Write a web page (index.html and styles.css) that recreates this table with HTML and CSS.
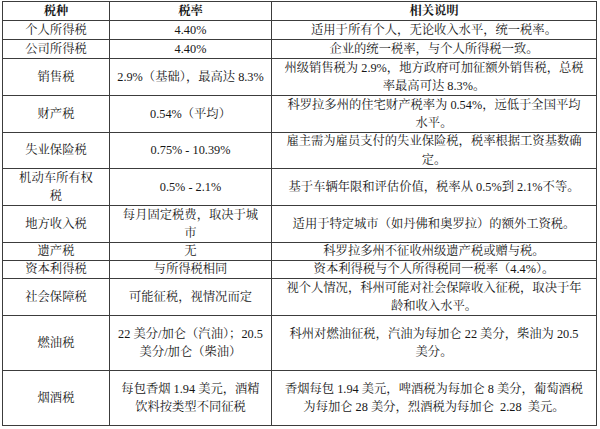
FILE: index.html
```html
<!DOCTYPE html>
<html lang="zh-CN">
<head>
<meta charset="utf-8">
<title>科罗拉多州税种</title>
<link rel="stylesheet" href="styles.css">
</head>
<body>
<div class="tax-table">
  <div class="cell head r1">税种</div>
  <div class="cell head r1">税率</div>
  <div class="cell head r1">相关说明</div>

  <div class="cell r1">个人所得税</div>
  <div class="cell r1">4.40%</div>
  <div class="cell r1">适用于所有个人，无论收入水平，统一税率。</div>

  <div class="cell r1">公司所得税</div>
  <div class="cell r1">4.40%</div>
  <div class="cell r1">企业的统一税率，与个人所得税一致。</div>

  <div class="cell r2">销售税</div>
  <div class="cell r2">2.9%（基础），最高达 8.3%</div>
  <div class="cell r2">州级销售税为 2.9%，地方政府可加征额外销售税，总税<br>率最高可达 8.3%。</div>

  <div class="cell r2">财产税</div>
  <div class="cell r2">0.54%（平均）</div>
  <div class="cell r2">科罗拉多州的住宅财产税率为 0.54%，远低于全国平均<br>水平。</div>

  <div class="cell r2s">失业保险税</div>
  <div class="cell r2s">0.75% - 10.39%</div>
  <div class="cell r2s">雇主需为雇员支付的失业保险税，税率根据工资基数确<br>定。</div>

  <div class="cell r2">机动车所有权<br>税</div>
  <div class="cell r2">0.5% - 2.1%</div>
  <div class="cell r2">基于车辆年限和评估价值，税率从 0.5%到 2.1%不等。</div>

  <div class="cell r2">地方收入税</div>
  <div class="cell r2">每月固定税费，取决于城<br>市</div>
  <div class="cell r2">适用于特定城市（如丹佛和奥罗拉）的额外工资税。</div>

  <div class="cell r1s">遗产税</div>
  <div class="cell r1s">无</div>
  <div class="cell r1s">科罗拉多州不征收州级遗产税或赠与税。</div>

  <div class="cell r1s">资本利得税</div>
  <div class="cell r1s">与所得税相同</div>
  <div class="cell r1s">资本利得税与个人所得税同一税率（4.4%）。</div>

  <div class="cell r2">社会保障税</div>
  <div class="cell r2">可能征税，视情况而定</div>
  <div class="cell r2">视个人情况，科州可能对社会保障收入征税，取决于年<br>龄和收入水平。</div>

  <div class="cell r3">燃油税</div>
  <div class="cell r3">22 美分/加仑（汽油）；20.5<br>美分/加仑（柴油）</div>
  <div class="cell r3">科州对燃油征税，汽油为每加仑 22 美分，柴油为 20.5<br>美分。</div>

  <div class="cell r3">烟酒税</div>
  <div class="cell r3">每包香烟 1.94 美元，酒精<br>饮料按类型不同征税</div>
  <div class="cell r3">香烟每包 1.94 美元，啤酒税为每加仑 8 美分，葡萄酒税<br>为每加仑 28 美分，烈酒税为每加仑&nbsp; 2.28&nbsp; 美元。</div>
</div>
</body>
</html>
```

FILE: styles.css
```css
html, body {
  margin: 0;
  background: #ffffff;
}
body {
  padding: 1px 0 0 2px;
  font-family: "Liberation Serif", "Noto Serif CJK SC", "Noto Sans CJK SC", serif;
  font-size: 12.3px;
  color: #161616;
}
.tax-table {
  display: grid;
  grid-template-columns: 106px 161px 324px;
  gap: 1px;
  padding: 1px;
  width: max-content;
  background: #3c3c3c;
}
.cell {
  background: #ffffff;
  display: flex;
  align-items: center;
  justify-content: center;
  text-align: center;
  line-height: 18.5px;
  white-space: nowrap;
  overflow: hidden;
}
.head {
  font-weight: bold;
}
.r1 { height: 18px; }
.r1s { height: 17px; }
.r2 { height: 36px; }
.r2s { height: 35px; }
.r3 { height: 54px; }
```
